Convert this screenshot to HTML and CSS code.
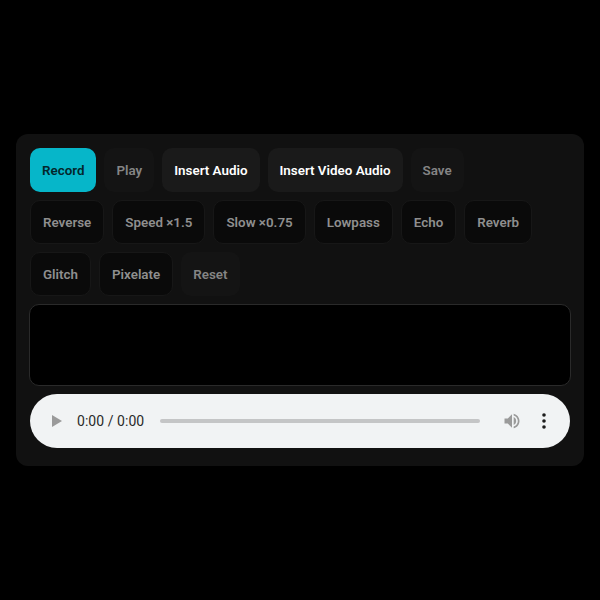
FILE: index.html
```html
<!DOCTYPE html>
<html lang="en">
<head>
<meta charset="utf-8">
<title>Audio Recorder</title>
<link rel="stylesheet" href="styles.css">
</head>
<body>
<main class="panel">
  <div class="controls">
    <button class="btn primary">Record</button>
    <button class="btn muted">Play</button>
    <button class="btn strong">Insert Audio</button>
    <button class="btn strong">Insert Video Audio</button>
    <button class="btn muted">Save</button>
  </div>
  <div class="controls">
    <button class="btn effect">Reverse</button>
    <button class="btn effect">Speed ×1.5</button>
    <button class="btn effect">Slow ×0.75</button>
    <button class="btn effect">Lowpass</button>
    <button class="btn effect">Echo</button>
    <button class="btn effect">Reverb</button>
    <button class="btn effect">Glitch</button>
    <button class="btn effect">Pixelate</button>
    <button class="btn muted">Reset</button>
  </div>
  <div class="wave"></div>
  <div class="player">
    <svg class="play" viewBox="0 0 12 14" width="12" height="14"><path d="M1 1v12l10-6z"/></svg>
    <span class="time">0:00 / 0:00</span>
    <div class="track"></div>
    <svg class="volume" viewBox="0 0 24 24" width="24" height="24"><path d="M3 9v6h4l5 5V4L7 9H3z"/><path d="M14 7.2v9.6c1.8-.8 3-2.700 3-4.800s-1.200-4-3-4.800z"/><path d="M14 3.200v2.100c2.900.9 5 3.600 5 6.700s-2.100 5.800-5 6.700v2.100c4-.9 7-4.500 7-8.800s-3-7.900-7-8.800z"/></svg>
    <svg class="more" viewBox="0 0 4 16" width="4" height="16"><circle cx="2" cy="2" r="1.800"/><circle cx="2" cy="8" r="1.800"/><circle cx="2" cy="14" r="1.800"/></svg>
  </div>
</main>
</body>
</html>
```
FILE: styles.css
```css
html, body {
  margin: 0;
  height: 100%;
  background: #000;
}
body {
  display: flex;
  align-items: center;
  justify-content: center;
  font-family: Roboto, "Liberation Sans", sans-serif;
}
.panel {
  box-sizing: border-box;
  width: 568px;
  padding: 14px 14px 18px;
  background: #111;
  border-radius: 12px;
  display: flex;
  flex-direction: column;
  gap: 8px;
}
.controls {
  display: flex;
  flex-wrap: wrap;
  gap: 8px;
}
.btn {
  box-sizing: border-box;
  height: 44px;
  padding: 0 12px;
  border: 0;
  border-radius: 10px;
  font: 600 13.38px Roboto, "Liberation Sans", sans-serif;
  background: #171717;
  color: #fff;
}
.primary {
  background: #06b6c9;
  color: #04262b;
}
.muted {
  color: #858585;
  background: #141414;
}
.strong {
  background: #1a1a1a;
  color: #fff;
}
.effect {
  background: #0a0a0a;
  border: 1px solid #171717;
  color: #8f8f8f;
}
.wave {
  height: 80px;
  margin: 0 -1px;
  background: #000;
  border: 1px solid #2a2a2a;
  border-radius: 10px;
}
.player {
  display: flex;
  align-items: center;
  height: 54px;
  padding: 0 24px 0 21px;
  border-radius: 27px;
  background: #f1f3f4;
}
.play {
  fill: #9a9a9a;
  flex: none;
}
.time {
  margin-left: 14px;
  font-size: 14px;
  letter-spacing: 0.05px;
  color: #2a2a2a;
  white-space: nowrap;
}
.track {
  flex: 1;
  height: 4px;
  margin: 0 22px 0 16px;
  border-radius: 2px;
  background: #c4c5c6;
}
.volume {
  fill: #9a9a9a;
  flex: none;
  width: 20px;
  height: 20px;
}
.more {
  fill: #1c1c1c;
  flex: none;
  margin-left: 20px;
}
```
